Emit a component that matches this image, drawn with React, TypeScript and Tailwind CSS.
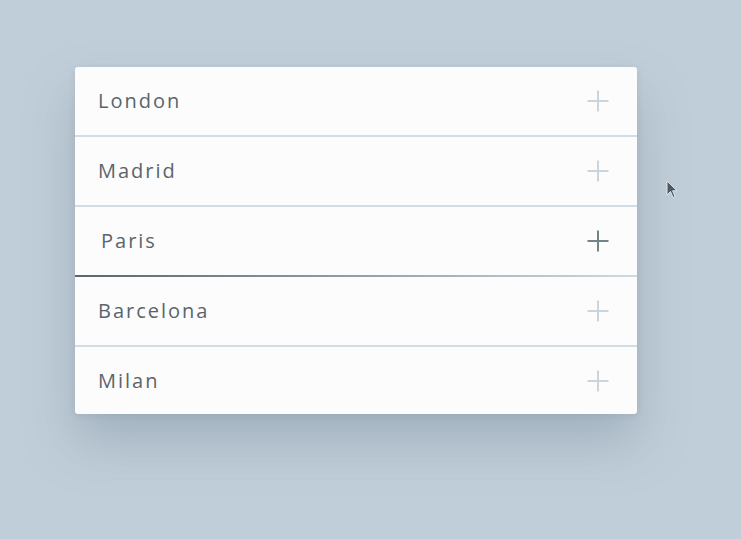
import React from "react";

const cities = ["London", "Madrid", "Paris", "Barcelona", "Milan"];

function Plus({ active }: { active: boolean }) {
  return (
    <svg width="22" height="22" viewBox="0 0 22 22" className="block">
      <path
        d="M11 0.5V21.5M0.5 11H21.5"
        stroke={active ? "#74828a" : "#c9d4dc"}
        strokeWidth="2"
        fill="none"
      />
    </svg>
  );
}

export default function App() {
  return (
    <div className="relative w-full h-[539px] overflow-hidden bg-[#c0ced9]">
      <div className="pt-[67px] pl-[75px]">
        <div
          className="w-[562px] rounded-[3px] bg-[#fcfcfc] shadow-[0_28px_50px_rgba(105,125,140,0.35),0_2px_6px_rgba(110,130,145,0.2)]"
          style={{ fontFamily: '"Open Sans", "Noto Sans", sans-serif' }}
        >
          {cities.map((c, i) => {
            const active = c === "Paris";
            const last = i === cities.length - 1;
            return (
              <div key={c}>
                <div
                  className={`flex items-center justify-between pr-[28px] ${last ? "h-[67px]" : "h-[68px]"}`}
                >
                  <span
                    className={`text-[20px] tracking-[0.1em] text-[#59656c] ${active ? "pl-[26px]" : "pl-[23px]"}`}
                  >
                    {c}
                  </span>
                  <Plus active={active} />
                </div>
                {last ? null : active ? (
                  <div className="h-[2px] bg-gradient-to-r from-[#5b666c] via-[#939fa6] to-[#d0dae1]" />
                ) : (
                  <div className="h-[2px] bg-[#d2dce3]" />
                )}
              </div>
            );
          })}
        </div>
      </div>
      <svg
        className="absolute left-[666px] top-[180px]"
        width="12"
        height="19"
        viewBox="0 0 12 19"
      >
        <path
          d="M1 1L1 15L4.5 11.5L7 17.5L9 16.6L6.6 10.8L11 10.8Z"
          fill="#4f5a60"
          stroke="#dfe6eb"
          strokeWidth="1"
          strokeLinejoin="round"
        />
      </svg>
    </div>
  );
}
